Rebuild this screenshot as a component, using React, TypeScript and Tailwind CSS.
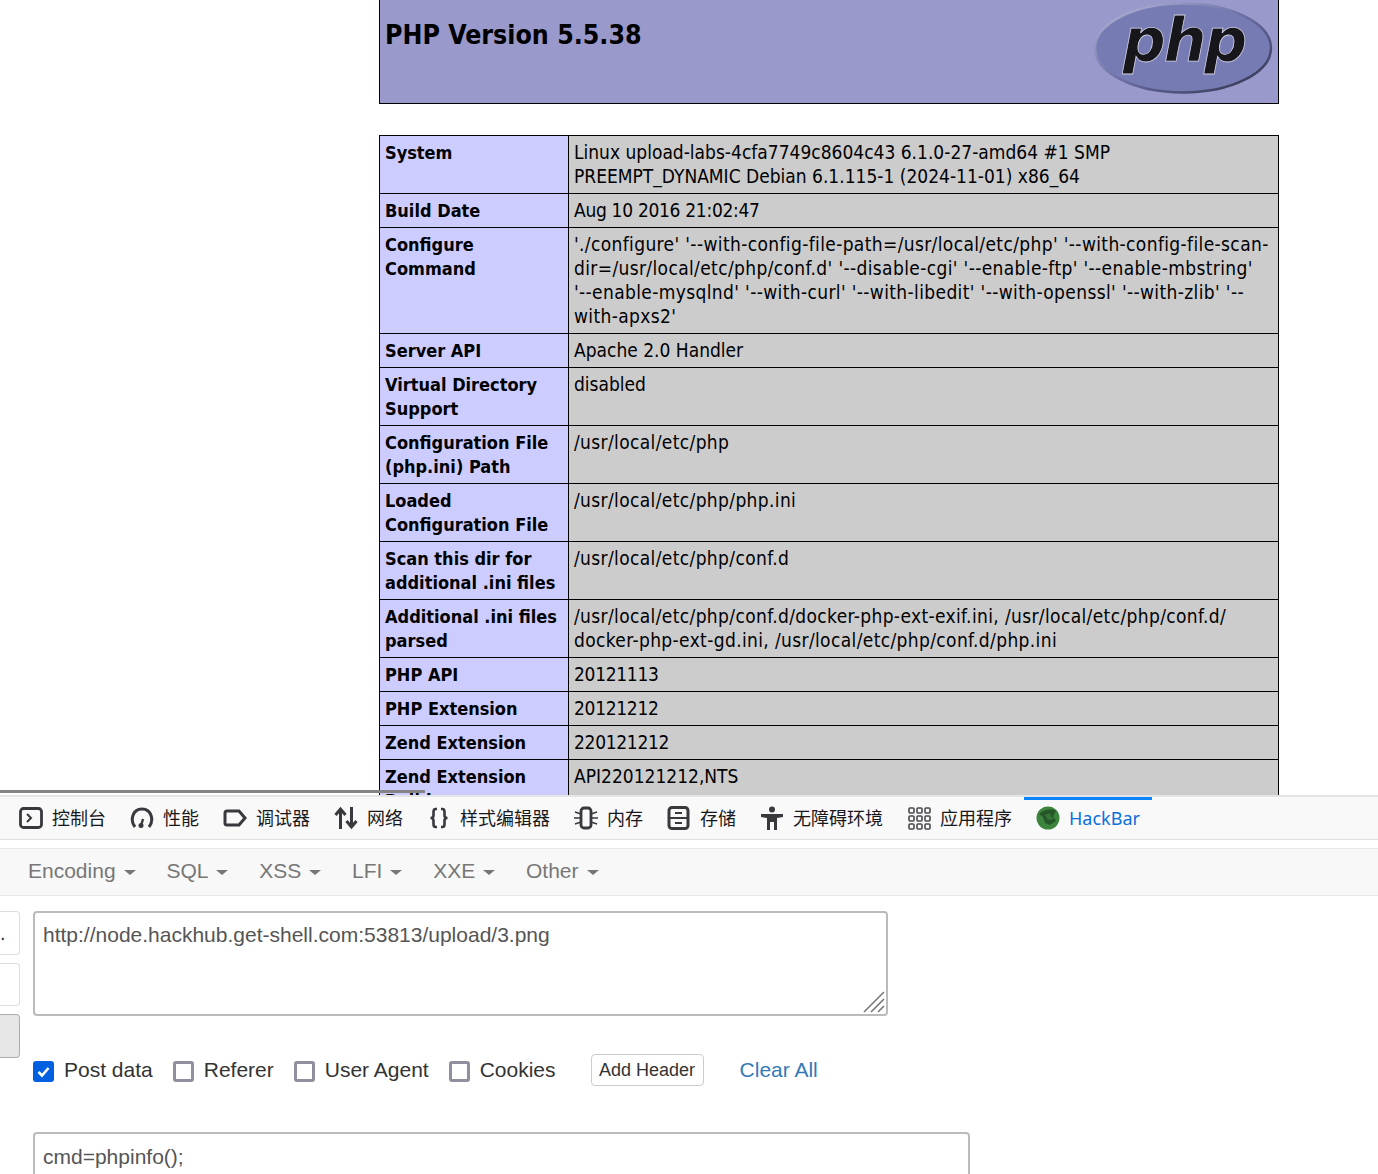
const wide = 'tracking-[0.36px]';
const narrow = 'tracking-[-0.3px]';

const rows: [string[], string[], string?][] = [
  [['System'], ['Linux upload-labs-4cfa7749c8604c43 6.1.0-27-amd64 #1 SMP', 'PREEMPT_DYNAMIC Debian 6.1.115-1 (2024-11-01) x86_64']],
  [['Build Date'], ['Aug 10 2016 21:02:47'], narrow],
  [['Configure', 'Command'], ["'./configure' '--with-config-file-path=/usr/local/etc/php' '--with-config-file-scan-", "dir=/usr/local/etc/php/conf.d' '--disable-cgi' '--enable-ftp' '--enable-mbstring'", "'--enable-mysqlnd' '--with-curl' '--with-libedit' '--with-openssl' '--with-zlib' '--", "with-apxs2'"], wide],
  [['Server API'], ['Apache 2.0 Handler']],
  [['Virtual Directory', 'Support'], ['disabled']],
  [['Configuration File', '(php.ini) Path'], ['/usr/local/etc/php'], wide],
  [['Loaded', 'Configuration File'], ['/usr/local/etc/php/php.ini'], wide],
  [['Scan this dir for', 'additional .ini files'], ['/usr/local/etc/php/conf.d'], wide],
  [['Additional .ini files', 'parsed'], ['/usr/local/etc/php/conf.d/docker-php-ext-exif.ini, /usr/local/etc/php/conf.d/', 'docker-php-ext-gd.ini, /usr/local/etc/php/conf.d/php.ini'], wide],
  [['PHP API'], ['20121113'], narrow],
  [['PHP Extension'], ['20121212'], narrow],
  [['Zend Extension'], ['220121212'], narrow],
  [['Zend Extension', 'Build'], ['API220121212,NTS']],
];

function PhpLogo() {
  return (
    <svg width="180" height="94" viewBox="0 0 180 94" className="mt-[1px] mr-[4px]">
      <defs>
        <linearGradient id="rim" x1="0" y1="0" x2="1" y2="1">
          <stop offset="0" stopColor="#b9bbdb" />
          <stop offset="0.5" stopColor="#6a6ea3" />
          <stop offset="1" stopColor="#2e2f48" />
        </linearGradient>
      </defs>
      <ellipse cx="89" cy="47" rx="88" ry="44.500" fill="#777bb3" stroke="url(#rim)" strokeWidth="2.500" />
      <text x="90" y="60" textAnchor="middle" fontFamily="DejaVu Sans" fontWeight="700" fontStyle="italic" fontSize="60" letterSpacing="-2" fill="#17171b" stroke="#cfd0e6" strokeWidth="0.800">php</text>
    </svg>
  );
}

function Tab({ icon, label }: { icon: React.ReactNode; label: string }) {
  return (
    <div className="flex h-full items-center gap-[9px] px-3 text-[18px] text-[#18181a]">
      {icon}
      <span className="pb-[2px]">{label}</span>
    </div>
  );
}

function Menu({ label }: { label: string }) {
  return (
    <div className="flex items-center gap-2 text-[21px] text-[#777777]">
      <span>{label}</span>
      <span className="mt-[3px] h-0 w-0 border-x-[6px] border-t-[5px] border-x-transparent border-t-[#777777]" />
    </div>
  );
}

function Check({ label, checked }: { label: string; checked?: boolean }) {
  return (
    <label className="flex items-center gap-[10px] text-[21px] text-[#333333]">
      {checked ? (
        <span className="mt-[2px] flex size-[21px] items-center justify-center rounded-[3px] bg-[#0060df]">
          <svg width="15" height="15" viewBox="0 0 15 15"><path d="M2.500 8l3.500 3.500L12.500 4" fill="none" stroke="#fff" strokeWidth="2.600" /></svg>
        </span>
      ) : (
        <span className="mt-[2px] size-[21px] rounded-[3px] border-[3px] border-[#8f8f9d] bg-white" />
      )}
      <span>{label}</span>
    </label>
  );
}

const ic = { fill: 'none', stroke: '#38383d', strokeWidth: 2.4 };

export default function App() {
  return (
    <div className="relative h-[1174px] overflow-hidden bg-white font-['Liberation_Sans',Arial,sans-serif]">
      <div className="flex h-[795px] flex-col items-start overflow-hidden pl-[379px] font-['DejaVu_Sans_Condensed','Noto_Sans',sans-serif] text-[19px] leading-6 text-black">
        <div className="flex h-[104px] w-[900px] shrink-0 justify-between border-x border-b border-black bg-[#9999cc]">
          <h1 className="mt-[18px] ml-[5px] text-[26.500px] leading-[34px] font-bold">PHP Version 5.5.38</h1>
          <PhpLogo />
        </div>
        <table className="mt-[31px] w-[900px] shrink-0 table-fixed border-collapse">
          <tbody>
            {rows.map(([head, value, spacing], i) => (
              <tr key={i}>
                <td className="w-[189px] border border-black bg-[#ccccff] px-[5px] pt-[5px] pb-1 align-top text-[18px] font-bold whitespace-nowrap">
                  {head.map((l) => <div key={l}>{l}</div>)}
                </td>
                <td className={`border border-black bg-[#cccccc] px-[5px] pt-1 pb-[5px] align-top whitespace-nowrap ${spacing ?? ''}`}>
                  {value.map((l) => <div key={l}>{l}</div>)}
                </td>
              </tr>
            ))}
          </tbody>
        </table>
      </div>
      <div className="absolute top-[790px] left-0 h-[3px] w-[425px] bg-[#858585]" />

      <div className="h-[2px] bg-[#e4e4e6]" />
      <div className="flex h-[43px] items-center border-b border-[#e0e0e2] bg-[#f9f9fa] pl-[7px] font-['Noto_Sans_CJK_SC','Noto_Sans',sans-serif]">
        <Tab label="控制台" icon={
          <svg width="24" height="24" viewBox="0 0 24 24" {...ic}><rect x="1.500" y="2.500" width="21" height="19" rx="3" strokeWidth="2.800" /><path d="M8 8l4 4-4 4" strokeWidth="2" /></svg>
        } />
        <Tab label="性能" icon={
          <svg width="24" height="24" viewBox="0 0 24 24" {...ic}><path d="M5 21C0 15 2 3 12 3S24 15 19 21" strokeWidth="3" /><path d="M11 20l2-7" /><circle cx="11" cy="19.500" r="2.500" fill="#38383d" stroke="none" /></svg>
        } />
        <Tab label="调试器" icon={
          <svg width="24" height="24" viewBox="0 0 24 24" {...ic}><path d="M4 5h12l6 7-6 7H4a2 2 0 0 1-2-2V7a2 2 0 0 1 2-2z" strokeWidth="3" /></svg>
        } />
        <Tab label="网络" icon={
          <svg width="24" height="24" viewBox="0 0 24 24" {...ic}><path d="M6.500 23V3M1.500 9l5-6 5 6M17.500 1v20M12.500 15l5 6 5-6" strokeWidth="3" /></svg>
        } />
        <Tab label="样式编辑器" icon={
          <svg width="24" height="24" viewBox="0 0 24 24" {...ic}><path d="M10 3H8.500C6.500 3 6.500 4.500 6.500 6v3.500c0 1.500-1 2.500-3 2.500 2 0 3 1 3 2.500V18c0 1.500 0 3 2 3H10M14 3h1.500c2 0 2 1.500 2 3v3.500c0 1.500 1 2.500 3 2.500-2 0-3 1-3 2.500V18c0 1.500 0 3-2 3H14" strokeWidth="2.600" /></svg>
        } />
        <Tab label="内存" icon={
          <svg width="24" height="24" viewBox="0 0 24 24" {...ic}><rect x="7" y="2" width="10" height="20" rx="3" strokeWidth="2.800" /><path d="M1 6l6 2M0 12h7M1 18l6-2M17 8l6-2M17 12h7M17 16l6 2" strokeWidth="1.500" /></svg>
        } />
        <Tab label="存储" icon={
          <svg width="24" height="24" viewBox="0 0 24 24" {...ic}><rect x="2" y="1.500" width="19" height="21" rx="3" strokeWidth="3" /><path d="M2 12h19M8 7h7M8 17h7" strokeWidth="2" /></svg>
        } />
        <Tab label="无障碍环境" icon={
          <svg width="24" height="24" viewBox="0 0 24 24" fill="#38383d"><circle cx="12" cy="3.500" r="3" /><path d="M1 8h22v3l-6 1v12h-3v-8h-4v8H7V12l-6-1z" /></svg>
        } />
        <Tab label="应用程序" icon={
          <svg width="24" height="24" viewBox="0 0 24 24" fill="none" stroke="#4a4a4f" strokeWidth="1.600">
            {[2, 10, 18].map((y) => [2, 10, 18].map((x) => <rect key={`${x}-${y}`} x={x} y={y} width="5" height="5" rx="1" />))}
          </svg>
        } />
        <div className="relative flex h-full items-center gap-[9px] px-3 font-['Noto_Sans',sans-serif] text-[18px] text-[#0b6fdc]">
          <span className="absolute inset-x-0 top-0 h-[3px] bg-[#0a84ff]" />
          <svg width="24" height="24" viewBox="0 0 24 24">
            <circle cx="12" cy="12" r="11.500" fill="#3c843c" />
            <path d="M3 8c4-4 11-6 17-3l-3 5 3 5-6 4-5-2-2-6z" fill="#25572a" />
            <path d="M9 9l5-2 1 3 3 3-6 1z" fill="#357535" />
          </svg>
          <span>HackBar</span>
        </div>
      </div>

      <div className="h-2" />
      <div className="flex h-[48px] items-center border-y border-[#e7e7e7] bg-[#f8f8f8] pb-[2px] pl-7">
        <div className="flex items-center gap-[30.800px]">
          <Menu label="Encoding" />
          <Menu label="SQL" />
          <Menu label="XSS" />
          <Menu label="LFI" />
          <Menu label="XXE" />
          <Menu label="Other" />
        </div>
      </div>

      <div className="flex items-start gap-[13px] pt-[15px]">
        <div className="flex w-5 flex-col gap-2">
          <div className="flex h-[43.500px] items-center rounded-r-[4px] border border-l-0 border-[#dddddd] text-[20px] leading-none text-[#333333]">.</div>
          <div className="h-[43.500px] rounded-r-[4px] border border-l-0 border-[#dddddd]" />
          <div className="h-[43.500px] rounded-r-[4px] border border-l-0 border-[#adadad] bg-[#e6e6e6]" />
        </div>
        <div>
          <div className="relative h-[105px] w-[855px] rounded-[4px] border-2 border-[#bbbbbb] px-2 py-[10px] text-[21px] leading-6 text-[#555555]">
            http://node.hackhub.get-shell.com:53813/upload/3.png
            <svg width="22" height="22" viewBox="0 0 22 22" className="absolute right-[1px] bottom-[1px]" stroke="#777777" strokeWidth="1.600">
              <path d="M1 21L21 1M8 21L21 8M15 21l6-6" />
            </svg>
          </div>

          <div className="mt-[38px] flex h-8 items-center">
            <div className="flex items-center gap-5">
              <Check label="Post data" checked />
              <Check label="Referer" />
              <Check label="User Agent" />
              <Check label="Cookies" />
            </div>
            <button className="ml-[35px] h-8 w-[113px] rounded-[4px] border border-[#cccccc] bg-white text-[18px] text-[#333333]">Add Header</button>
            <span className="ml-9 text-[21px] text-[#337ab7]">Clear All</span>
          </div>

          <div className="mt-[46px] h-[80px] w-[937px] rounded-[4px] border-2 border-[#bbbbbb] px-2 pt-[11px] text-[21px] leading-6 text-[#555555]">
            cmd=phpinfo();
          </div>
        </div>
      </div>
    </div>
  );
}
